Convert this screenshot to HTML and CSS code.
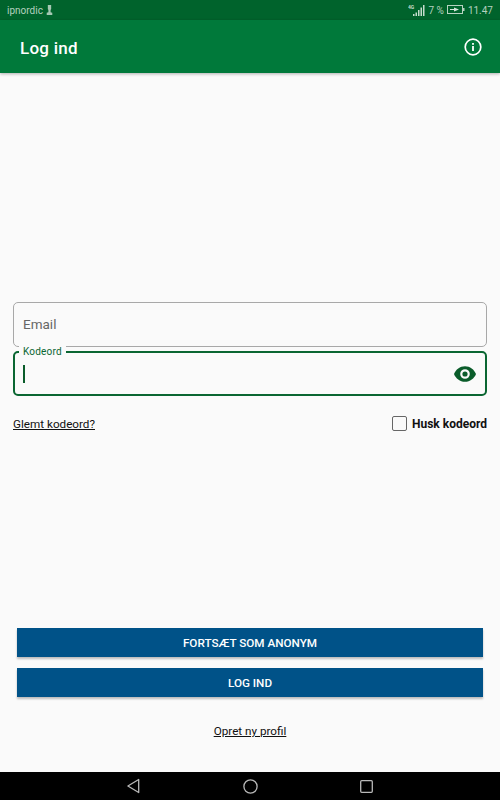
FILE: index.html
```html
<!DOCTYPE html>
<html lang="da">
<head>
<meta charset="utf-8">
<title>Log ind</title>
<link rel="stylesheet" href="styles.css">
</head>
<body>
<div class="screen">
  <div class="statusbar">
    <div class="status-left">
      <span>ipnordic</span>
      <svg class="status-key" width="7" height="10" viewBox="0 0 6 9"><path d="M1.500 0h3v3.500l-.5 1v2l1.500.5v2H.5V7L2 6.500v-2l-.5-1z" fill="#a5c8b3"/></svg>
    </div>
    <div class="status-right">
      <svg class="status-signal" width="18" height="12" viewBox="0 0 18 12">
        <text x="0" y="5" class="status-4g">4G</text>
        <path d="M5 10h1.500v2H5zM7.500 8.500H9V12H7.500zM10 6h1.500v6H10zM12.500 3.500H14V12h-1.500zM15 1h1.500v11H15z" fill="#c5dccd"/>
      </svg>
      <span class="status-pct">7 %</span>
      <svg class="status-battery" width="18" height="10" viewBox="0 0 18 10">
        <rect x=".5" y=".5" width="15" height="8" fill="none" stroke="#b7d2c1"/>
        <rect x="16" y="3" width="1.500" height="3" fill="#b7d2c1"/>
        <path d="M3 4h4V2.500L12 4.500 7 6.500V5H3z" fill="#d5e5da"/>
      </svg>
      <span class="status-time">11.47</span>
    </div>
  </div>
  <header class="appbar">
    <h1 class="appbar-title">Log ind</h1>
    <svg class="info-icon" width="20" height="20" viewBox="0 0 20 20">
      <circle cx="10" cy="10" r="7.800" fill="none" stroke="#fff" stroke-width="1.700"/>
      <rect x="9.100" y="9" width="1.800" height="5" fill="#fff"/>
      <rect x="9.100" y="6" width="1.800" height="1.800" fill="#fff"/>
    </svg>
  </header>
  <main class="content">
    <form class="form">
      <div class="field">
        <span class="field-placeholder">Email</span>
      </div>
      <div class="field field-focused">
        <span class="field-label">Kodeord</span>
        <span class="caret"></span>
        <svg class="eye-icon" width="24" height="24" viewBox="0 0 24 24">
          <path fill="#0a5c2a" fill-rule="evenodd" d="M12 4.200C7 4.200 2.730 7.500 1 12c1.730 4.500 6 7.800 11 7.800s9.270-3.300 11-7.800c-1.730-4.500-6-7.800-11-7.800zM12 16.800a4.800 4.800 0 1 1 0-9.600 4.800 4.800 0 0 1 0 9.600zM12 9.400a2.600 2.600 0 1 0 0 5.200 2.600 2.600 0 0 0 0-5.200z"/>
        </svg>
      </div>
      <div class="options">
        <a class="link" href="#">Glemt kodeord?</a>
        <label class="remember">
          <span class="checkbox"></span>
          <span class="remember-text">Husk kodeord</span>
        </label>
      </div>
    </form>
    <div class="actions">
      <button class="btn" type="button">FORTSÆT SOM ANONYM</button>
      <button class="btn" type="button">LOG IND</button>
      <a class="link signup" href="#">Opret ny profil</a>
    </div>
  </main>
  <nav class="navbar">
    <svg width="14" height="16" viewBox="0 0 14 16"><path d="M11.700 1.500v13L.9 8z" fill="none" stroke="#b8b8b8" stroke-width="1.300" stroke-linejoin="round"/></svg>
    <svg width="15" height="15" viewBox="0 0 15 15"><circle cx="7.500" cy="7.500" r="6.600" fill="none" stroke="#b8b8b8" stroke-width="1.300"/></svg>
    <svg width="13" height="13" viewBox="0 0 13 13"><rect x=".7" y=".7" width="11.600" height="11.600" rx="1" fill="none" stroke="#b8b8b8" stroke-width="1.300"/></svg>
  </nav>
</div>
</body>
</html>
```

FILE: styles.css
```css
* { box-sizing: border-box; }
html, body { margin: 0; padding: 0; }
body { font-family: Roboto, "Liberation Sans", sans-serif; background: #fafafa; }

.screen {
  width: 500px;
  height: 800px;
  display: flex;
  flex-direction: column;
  overflow: hidden;
  background: #fafafa;
}

.statusbar {
  height: 20px;
  flex: none;
  background: #00632c;
  color: #b4d0bf;
  font-size: 10px;
  display: flex;
  align-items: center;
  justify-content: space-between;
  padding: 0 7px 0 7px;
}
.status-left { display: flex; align-items: center; gap: 3px; }
.status-right { display: flex; align-items: center; gap: 2px; font-size: 10px; }
.status-4g { font: 700 5px Roboto, sans-serif; fill: #c5dccd; }
.status-pct { margin-right: 1px; }
.status-battery { margin-right: 1px; }

.appbar {
  height: 53px;
  flex: none;
  background: #00793a;
  color: #fff;
  display: flex;
  align-items: center;
  justify-content: space-between;
  padding: 0 17px 0 20px;
  box-shadow: 0 1px 3px rgba(0, 0, 0, .3);
  position: relative;
}
.appbar-title { margin: 2px 0 0; font-size: 17px; font-weight: 500; letter-spacing: .25px; }

.content {
  flex: 1;
  display: flex;
  flex-direction: column;
  padding: 229px 13px 0;
}

.field {
  height: 45px;
  border: 1px solid #a8a8a8;
  border-radius: 5px;
  display: flex;
  align-items: center;
  padding: 0 9px 1px;
  position: relative;
  background: #fafafa;
}
.field-placeholder { font-size: 13.500px; color: #666; }
.field-focused {
  margin-top: 4px;
  border: 2px solid #0a6632;
  justify-content: space-between;
  padding: 0 8px;
}
.field-label {
  position: absolute;
  left: 4px;
  top: -7px;
  padding: 0 4px;
  background: #fafafa;
  color: #0a6632;
  font-size: 10px;
  line-height: 12px;
  letter-spacing: .2px;
}
.caret { width: 1.500px; height: 18px; background: #0a5c2a; }

.options {
  display: flex;
  align-items: center;
  justify-content: space-between;
  margin-top: 19px;
  height: 17px;
  font-size: 12px;
}
.link { color: #111; text-decoration: underline; font-size: 11.700px; }
.remember { display: flex; align-items: center; gap: 5px; color: #111; }
.remember-text { font-size: 12px; font-weight: 700; }
.checkbox {
  width: 15px;
  height: 15px;
  border: 1.500px solid #666;
  border-radius: 2px;
}

.actions {
  margin-top: auto;
  padding: 0 4px 34px;
  display: flex;
  flex-direction: column;
  align-items: stretch;
  gap: 10.700px;
}
.btn {
  height: 29.300px;
  border: 0;
  border-radius: 0;
  background: #005288;
  color: #fff;
  font: 500 11.700px Roboto, sans-serif;
  box-shadow: 0 2px 2px rgba(0, 0, 0, .25);
  padding: 0;
}
.signup { align-self: center; margin-top: 16px; }

.navbar {
  height: 28px;
  flex: none;
  background: #000;
  display: flex;
  align-items: center;
  justify-content: center;
  gap: 102px;
}
```
